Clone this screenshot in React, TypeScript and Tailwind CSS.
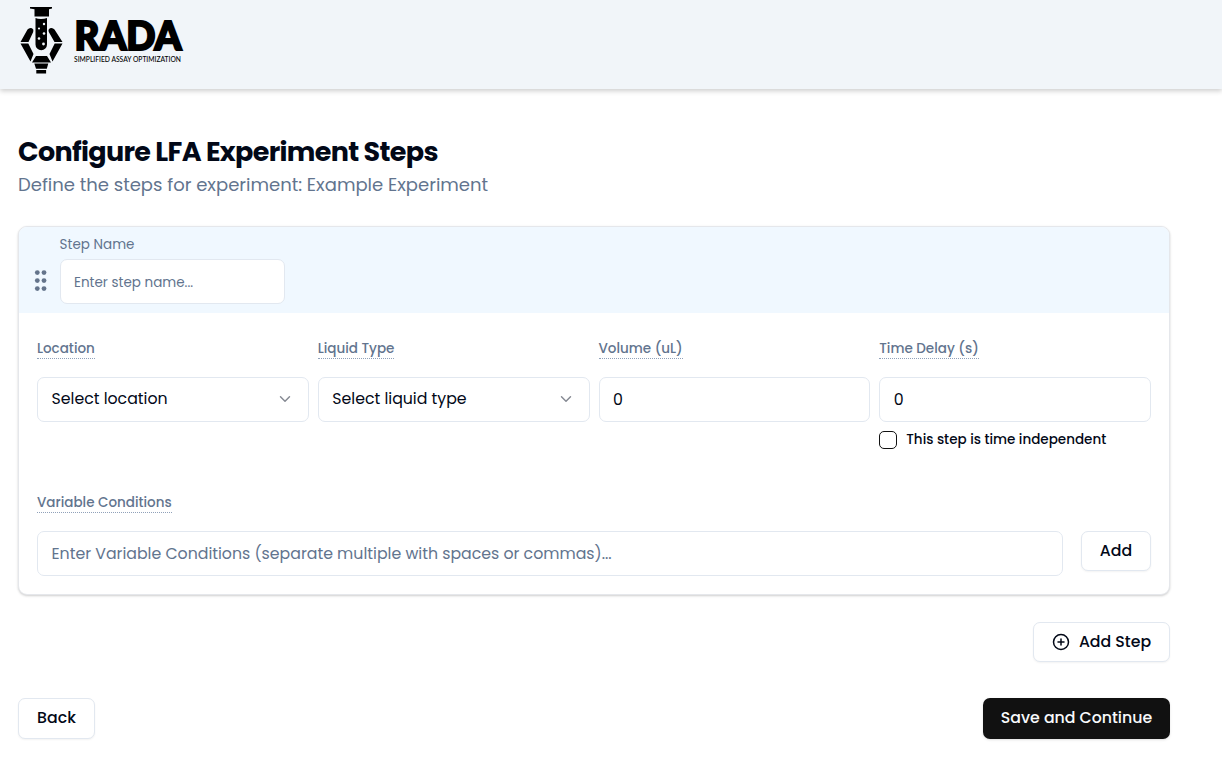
import { ChevronDown, CirclePlus } from "lucide-react";
import type { ReactNode } from "react";

function Logo() {
  return (
    <svg width="170" height="72" viewBox="18 4 170 72" role="img" aria-label="RADA" fill="#000" overflow="visible">
      <path d="M30 7h22v1.5l-3 .8v7.2H34.500V9.300L30 8.500z" />
      <path d="M35.500 18q2 1 5.500 1t6-1v26.500a5.700 5.700 0 0 1-11.500 0z" />
      <path d="M27.500 29.500q2-2.200 4.500-1.200 2.200 1.300 1.200 3.700L28.500 42H20.500zM54.500 29.500q-2-2.200-4.500-1.200-2.200 1.300-1.200 3.700L54.500 42H62.500z" />
      <path d="M20.500 43.500h7.800l5.200 10.500-3 7.500zM62.500 43.500h-7.800l-5.200 10.500 3 7.500z" />
      <path d="M36 56h11l4 6.500H32zM34.300 63.500h14l-1.500 5.300H36zM36.300 70h9.800v3.500h-9.800z" />
      <g fill="#f1f5f9">
        <circle cx="44" cy="24" r="1.200" />
        <circle cx="39" cy="28.500" r="1.100" />
        <circle cx="44" cy="33.500" r="1.300" />
        <circle cx="39" cy="38.500" r="1.300" />
        <circle cx="43.500" cy="44" r="1.400" />
      </g>
      <text x="74.500" y="49.600" fontFamily="Lato, sans-serif" fontWeight="900" fontSize="40.500" textLength="107" lengthAdjust="spacingAndGlyphs" stroke="#000" strokeWidth="2.200">RADA</text>
      <text x="74" y="62" fontFamily="Lato, sans-serif" fontWeight="500" fontSize="7.600" textLength="107" lengthAdjust="spacingAndGlyphs">SIMPLIFIED ASSAY OPTIMIZATION</text>
    </svg>
  );
}

function Label({ children }: { children: ReactNode }) {
  return (
    <div className="flex h-[19px]">
      <span className="h-[19px] whitespace-nowrap border-b border-dotted border-slate-400 text-[13.500px] font-medium leading-[18px] text-slate-500">
        {children}
      </span>
    </div>
  );
}

const field = "h-[45px] w-full rounded-[7px] border border-slate-200 bg-white px-[13.500px] text-[15.750px] outline-none";

function Select({ children }: { children: ReactNode }) {
  return (
    <button className={`${field} flex items-center justify-between pb-0.5`}>
      <span className="whitespace-nowrap">{children}</span>
      <ChevronDown className="size-[18px] text-[#858992]" strokeWidth={1.900} />
    </button>
  );
}

const outline = "flex items-center justify-center whitespace-nowrap rounded-[7px] border border-slate-200 bg-white text-[15.750px] font-medium shadow-[0_1px_2px_rgba(0,0,0,0.05)]";

export default function App() {
  return (
    <div className="min-h-[772px] bg-white font-['Poppins','Inter',sans-serif] text-[#020817]">
      <header className="flex h-[89px] items-start bg-slate-100 pl-[18px] pt-1 shadow-[0_2px_5px_rgba(0,0,0,0.2)]">
        <Logo />
      </header>
      <main className="ml-[18px] w-[1152px] pt-[45px]">
        <h1 className="whitespace-nowrap text-[27px] font-bold leading-[36px] tracking-tight">Configure LFA Experiment Steps</h1>
        <p className="whitespace-nowrap text-[18px] leading-[30px] text-slate-500">Define the steps for experiment: Example Experiment</p>

        <section className="mt-[26px] h-[369px] overflow-hidden rounded-[9px] border border-gray-200 bg-white shadow-[0_1px_3px_rgba(0,0,0,0.1),0_1px_2px_rgba(0,0,0,0.1)]">
          <div className="flex h-[86px] bg-[#f0f8ff] pl-[15px]">
            <svg className="mt-[42px]" width="14" height="24" viewBox="0 0 14 24" fill="#64748b">
              <circle cx="3.300" cy="3.600" r="2.400" /><circle cx="10" cy="3.600" r="2.400" />
              <circle cx="3.300" cy="11.600" r="2.400" /><circle cx="10" cy="11.600" r="2.400" />
              <circle cx="3.300" cy="19.600" r="2.400" /><circle cx="10" cy="19.600" r="2.400" />
            </svg>
            <div className="ml-3 w-[225px] pt-[7px]">
              <div className="-ml-[0.400px] h-[25px] whitespace-nowrap text-[13.500px] leading-[22px] text-slate-500">Step Name</div>
              <input className="h-[45px] w-full rounded-[7px] border border-slate-200 bg-white px-[13px] pt-0.5 text-[13.500px] outline-none placeholder:text-slate-500" placeholder="Enter step name..." />
            </div>
          </div>
          <div className="px-[18px] pt-[27px]">
            <div className="grid grid-cols-4 gap-[9px]">
              <div className="flex flex-col gap-[18px]">
                <Label>Location</Label>
                <Select>Select location</Select>
              </div>
              <div className="flex flex-col gap-[18px]">
                <Label>Liquid Type</Label>
                <Select>Select liquid type</Select>
              </div>
              <div className="flex flex-col gap-[18px]">
                <Label>Volume (uL)</Label>
                <input className={field} defaultValue="0" />
              </div>
              <div className="flex flex-col gap-[18px]">
                <Label>Time Delay (s)</Label>
                <input className={field} defaultValue="0" />
                <label className="-mt-[9px] flex h-[18px] items-center gap-[9px]">
                  <span className="size-[18px] rounded-[5px] border border-[#111]" />
                  <span className="whitespace-nowrap text-[13.500px] font-medium leading-[18px]">This step is time independent</span>
                </label>
              </div>
            </div>
            <div className="mt-[45px] flex flex-col gap-[18px]">
              <Label>Variable Conditions</Label>
              <div className="flex items-start gap-[18px]">
                <input className={`${field} flex-1 placeholder:text-slate-500`} placeholder="Enter Variable Conditions (separate multiple with spaces or commas)..." />
                <button className={`${outline} h-10 w-[70px]`}>Add</button>
              </div>
            </div>
          </div>
        </section>

        <div className="mt-[27px] flex justify-end">
          <button className={`${outline} h-10 w-[137px] gap-[9px]`}>
            <CirclePlus className="size-[18px]" strokeWidth={2} />
            <span>Add Step</span>
          </button>
        </div>
        <div className="mt-9 flex justify-between">
          <button className={`${outline} h-[41px] w-[77px] pb-0.5`}>Back</button>
          <button className="h-[41px] w-[187px] whitespace-nowrap rounded-[7px] bg-[#111] pb-0.5 text-[15.750px] font-medium text-slate-50 shadow-sm">Save and Continue</button>
        </div>
      </main>
    </div>
  );
}
